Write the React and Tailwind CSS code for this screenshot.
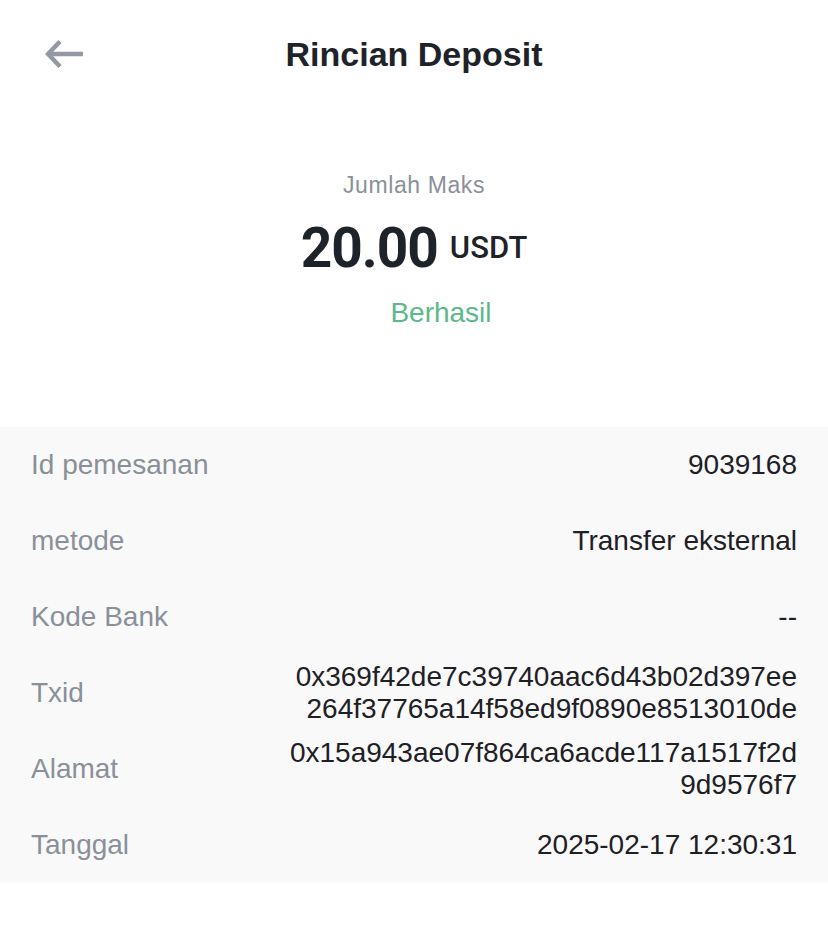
import React from 'react';

const rows = [
    { label: 'Id pemesanan', value: ['9039168'] },
    { label: 'metode', value: ['Transfer eksternal'] },
    { label: 'Kode Bank', value: ['--'] },
    { label: 'Txid', value: ['0x369f42de7c39740aac6d43b02d397ee', '264f37765a14f58ed9f0890e8513010de'] },
    { label: 'Alamat', value: ['0x15a943ae07f864ca6acde117a1517f2d', '9d9576f7'] },
    { label: 'Tanggal', value: ['2025-02-17 12:30:31'] },
];

const BackArrow = () => (
    <svg width="40" height="30" viewBox="0 0 40 30" fill="none" stroke="#9299a2" strokeWidth="4.5" strokeLinecap="butt" strokeLinejoin="miter">
        <path d="M3 15 H38" />
        <path d="M15 2.5 L3 15 L15 27.5" />
    </svg>
);

const App = () => {
    return (
        <div className="w-[828px] min-h-[927px] bg-white font-['Liberation_Sans',Arial,sans-serif]">
            {/* header */}
            <div className="h-[108px] grid grid-cols-[1fr_auto_1fr] items-center">
                <div className="pl-[45px] flex items-center">
                    <BackArrow />
                </div>
                <h1 className="text-[34px] font-bold text-[#1e2329]">Rincian Deposit</h1>
                <div />
            </div>

            {/* amount */}
            <div className="flex flex-col items-center">
                <p className="mt-[63px] text-[23px] leading-[28px] text-[#8a9099] tracking-[0.6px]">Jumlah Maks</p>
                <div className="mt-[18px] flex items-center gap-[12px] font-['Roboto',sans-serif]">
                    <span className="text-[55px] leading-[62px] font-bold text-[#1e2329] tracking-[-1px]">20.00</span>
                    <span className="text-[31px] leading-[40px] font-medium text-[#1e2329]">USDT</span>
                </div>
                <p className="mt-[18px] pl-[54px] text-[28px] leading-[32px] text-[#5cb88a]">Berhasil</p>
            </div>

            {/* details */}
            <div className="mt-[98px] bg-[#f9f9f9]">
                {rows.map((row) => (
                    <div key={row.label} className="h-[76px] px-[31px] flex items-center justify-between">
                        <span className="text-[28px] leading-[32px] text-[#8a9099] shrink-0">{row.label}</span>
                        <div className="text-right text-[28px] leading-[32px] text-[#1e2026]">
                            {row.value.map((line) => (
                                <div key={line}>{line}</div>
                            ))}
                        </div>
                    </div>
                ))}
            </div>
        </div>
    );
};

export default App;
